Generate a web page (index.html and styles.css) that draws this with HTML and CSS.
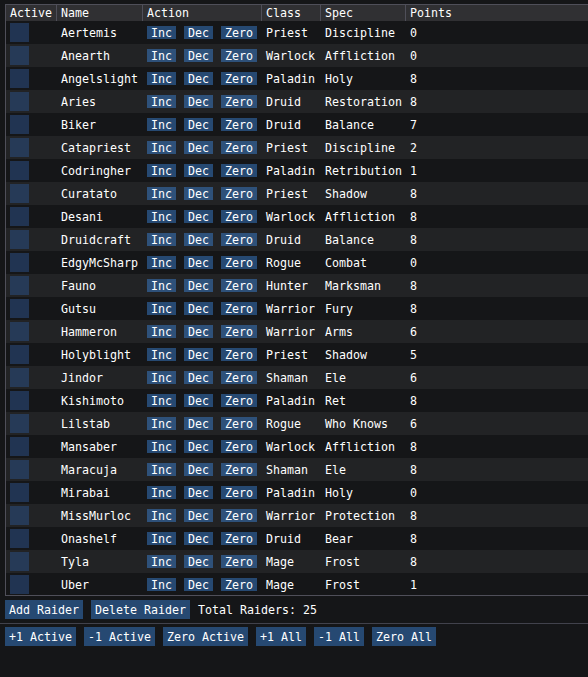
FILE: index.html
```html
<!DOCTYPE html>
<html>
<head>
<meta charset="utf-8">
<link rel="stylesheet" href="styles.css">
</head>
<body>
<div class="window">
  <div class="table">
    <div class="row head">
      <div class="cell">Active</div>
      <div class="cell">Name</div>
      <div class="cell">Action</div>
      <div class="cell">Class</div>
      <div class="cell">Spec</div>
      <div class="cell">Points</div>
    </div>
    <div class="row"><div class="cell"><div class="chk"></div></div><div class="cell"><div class="t">Aertemis</div></div><div class="cell"><div class="acts"><div class="sb">Inc</div><div class="sb">Dec</div><div class="sb">Zero</div></div></div><div class="cell"><div class="t">Priest</div></div><div class="cell"><div class="t">Discipline</div></div><div class="cell"><div class="t">0</div></div></div>
    <div class="row alt"><div class="cell"><div class="chk"></div></div><div class="cell"><div class="t">Anearth</div></div><div class="cell"><div class="acts"><div class="sb">Inc</div><div class="sb">Dec</div><div class="sb">Zero</div></div></div><div class="cell"><div class="t">Warlock</div></div><div class="cell"><div class="t">Affliction</div></div><div class="cell"><div class="t">0</div></div></div>
    <div class="row"><div class="cell"><div class="chk"></div></div><div class="cell"><div class="t">Angelslight</div></div><div class="cell"><div class="acts"><div class="sb">Inc</div><div class="sb">Dec</div><div class="sb">Zero</div></div></div><div class="cell"><div class="t">Paladin</div></div><div class="cell"><div class="t">Holy</div></div><div class="cell"><div class="t">8</div></div></div>
    <div class="row alt"><div class="cell"><div class="chk"></div></div><div class="cell"><div class="t">Aries</div></div><div class="cell"><div class="acts"><div class="sb">Inc</div><div class="sb">Dec</div><div class="sb">Zero</div></div></div><div class="cell"><div class="t">Druid</div></div><div class="cell"><div class="t">Restoration</div></div><div class="cell"><div class="t">8</div></div></div>
    <div class="row"><div class="cell"><div class="chk"></div></div><div class="cell"><div class="t">Biker</div></div><div class="cell"><div class="acts"><div class="sb">Inc</div><div class="sb">Dec</div><div class="sb">Zero</div></div></div><div class="cell"><div class="t">Druid</div></div><div class="cell"><div class="t">Balance</div></div><div class="cell"><div class="t">7</div></div></div>
    <div class="row alt"><div class="cell"><div class="chk"></div></div><div class="cell"><div class="t">Catapriest</div></div><div class="cell"><div class="acts"><div class="sb">Inc</div><div class="sb">Dec</div><div class="sb">Zero</div></div></div><div class="cell"><div class="t">Priest</div></div><div class="cell"><div class="t">Discipline</div></div><div class="cell"><div class="t">2</div></div></div>
    <div class="row"><div class="cell"><div class="chk"></div></div><div class="cell"><div class="t">Codringher</div></div><div class="cell"><div class="acts"><div class="sb">Inc</div><div class="sb">Dec</div><div class="sb">Zero</div></div></div><div class="cell"><div class="t">Paladin</div></div><div class="cell"><div class="t">Retribution</div></div><div class="cell"><div class="t">1</div></div></div>
    <div class="row alt"><div class="cell"><div class="chk"></div></div><div class="cell"><div class="t">Curatato</div></div><div class="cell"><div class="acts"><div class="sb">Inc</div><div class="sb">Dec</div><div class="sb">Zero</div></div></div><div class="cell"><div class="t">Priest</div></div><div class="cell"><div class="t">Shadow</div></div><div class="cell"><div class="t">8</div></div></div>
    <div class="row"><div class="cell"><div class="chk"></div></div><div class="cell"><div class="t">Desani</div></div><div class="cell"><div class="acts"><div class="sb">Inc</div><div class="sb">Dec</div><div class="sb">Zero</div></div></div><div class="cell"><div class="t">Warlock</div></div><div class="cell"><div class="t">Affliction</div></div><div class="cell"><div class="t">8</div></div></div>
    <div class="row alt"><div class="cell"><div class="chk"></div></div><div class="cell"><div class="t">Druidcraft</div></div><div class="cell"><div class="acts"><div class="sb">Inc</div><div class="sb">Dec</div><div class="sb">Zero</div></div></div><div class="cell"><div class="t">Druid</div></div><div class="cell"><div class="t">Balance</div></div><div class="cell"><div class="t">8</div></div></div>
    <div class="row"><div class="cell"><div class="chk"></div></div><div class="cell"><div class="t">EdgyMcSharp</div></div><div class="cell"><div class="acts"><div class="sb">Inc</div><div class="sb">Dec</div><div class="sb">Zero</div></div></div><div class="cell"><div class="t">Rogue</div></div><div class="cell"><div class="t">Combat</div></div><div class="cell"><div class="t">0</div></div></div>
    <div class="row alt"><div class="cell"><div class="chk"></div></div><div class="cell"><div class="t">Fauno</div></div><div class="cell"><div class="acts"><div class="sb">Inc</div><div class="sb">Dec</div><div class="sb">Zero</div></div></div><div class="cell"><div class="t">Hunter</div></div><div class="cell"><div class="t">Marksman</div></div><div class="cell"><div class="t">8</div></div></div>
    <div class="row"><div class="cell"><div class="chk"></div></div><div class="cell"><div class="t">Gutsu</div></div><div class="cell"><div class="acts"><div class="sb">Inc</div><div class="sb">Dec</div><div class="sb">Zero</div></div></div><div class="cell"><div class="t">Warrior</div></div><div class="cell"><div class="t">Fury</div></div><div class="cell"><div class="t">8</div></div></div>
    <div class="row alt"><div class="cell"><div class="chk"></div></div><div class="cell"><div class="t">Hammeron</div></div><div class="cell"><div class="acts"><div class="sb">Inc</div><div class="sb">Dec</div><div class="sb">Zero</div></div></div><div class="cell"><div class="t">Warrior</div></div><div class="cell"><div class="t">Arms</div></div><div class="cell"><div class="t">6</div></div></div>
    <div class="row"><div class="cell"><div class="chk"></div></div><div class="cell"><div class="t">Holyblight</div></div><div class="cell"><div class="acts"><div class="sb">Inc</div><div class="sb">Dec</div><div class="sb">Zero</div></div></div><div class="cell"><div class="t">Priest</div></div><div class="cell"><div class="t">Shadow</div></div><div class="cell"><div class="t">5</div></div></div>
    <div class="row alt"><div class="cell"><div class="chk"></div></div><div class="cell"><div class="t">Jindor</div></div><div class="cell"><div class="acts"><div class="sb">Inc</div><div class="sb">Dec</div><div class="sb">Zero</div></div></div><div class="cell"><div class="t">Shaman</div></div><div class="cell"><div class="t">Ele</div></div><div class="cell"><div class="t">6</div></div></div>
    <div class="row"><div class="cell"><div class="chk"></div></div><div class="cell"><div class="t">Kishimoto</div></div><div class="cell"><div class="acts"><div class="sb">Inc</div><div class="sb">Dec</div><div class="sb">Zero</div></div></div><div class="cell"><div class="t">Paladin</div></div><div class="cell"><div class="t">Ret</div></div><div class="cell"><div class="t">8</div></div></div>
    <div class="row alt"><div class="cell"><div class="chk"></div></div><div class="cell"><div class="t">Lilstab</div></div><div class="cell"><div class="acts"><div class="sb">Inc</div><div class="sb">Dec</div><div class="sb">Zero</div></div></div><div class="cell"><div class="t">Rogue</div></div><div class="cell"><div class="t">Who Knows</div></div><div class="cell"><div class="t">6</div></div></div>
    <div class="row"><div class="cell"><div class="chk"></div></div><div class="cell"><div class="t">Mansaber</div></div><div class="cell"><div class="acts"><div class="sb">Inc</div><div class="sb">Dec</div><div class="sb">Zero</div></div></div><div class="cell"><div class="t">Warlock</div></div><div class="cell"><div class="t">Affliction</div></div><div class="cell"><div class="t">8</div></div></div>
    <div class="row alt"><div class="cell"><div class="chk"></div></div><div class="cell"><div class="t">Maracuja</div></div><div class="cell"><div class="acts"><div class="sb">Inc</div><div class="sb">Dec</div><div class="sb">Zero</div></div></div><div class="cell"><div class="t">Shaman</div></div><div class="cell"><div class="t">Ele</div></div><div class="cell"><div class="t">8</div></div></div>
    <div class="row"><div class="cell"><div class="chk"></div></div><div class="cell"><div class="t">Mirabai</div></div><div class="cell"><div class="acts"><div class="sb">Inc</div><div class="sb">Dec</div><div class="sb">Zero</div></div></div><div class="cell"><div class="t">Paladin</div></div><div class="cell"><div class="t">Holy</div></div><div class="cell"><div class="t">0</div></div></div>
    <div class="row alt"><div class="cell"><div class="chk"></div></div><div class="cell"><div class="t">MissMurloc</div></div><div class="cell"><div class="acts"><div class="sb">Inc</div><div class="sb">Dec</div><div class="sb">Zero</div></div></div><div class="cell"><div class="t">Warrior</div></div><div class="cell"><div class="t">Protection</div></div><div class="cell"><div class="t">8</div></div></div>
    <div class="row"><div class="cell"><div class="chk"></div></div><div class="cell"><div class="t">Onashelf</div></div><div class="cell"><div class="acts"><div class="sb">Inc</div><div class="sb">Dec</div><div class="sb">Zero</div></div></div><div class="cell"><div class="t">Druid</div></div><div class="cell"><div class="t">Bear</div></div><div class="cell"><div class="t">8</div></div></div>
    <div class="row alt"><div class="cell"><div class="chk"></div></div><div class="cell"><div class="t">Tyla</div></div><div class="cell"><div class="acts"><div class="sb">Inc</div><div class="sb">Dec</div><div class="sb">Zero</div></div></div><div class="cell"><div class="t">Mage</div></div><div class="cell"><div class="t">Frost</div></div><div class="cell"><div class="t">8</div></div></div>
    <div class="row last"><div class="cell"><div class="chk"></div></div><div class="cell"><div class="t">Uber</div></div><div class="cell"><div class="acts"><div class="sb">Inc</div><div class="sb">Dec</div><div class="sb">Zero</div></div></div><div class="cell"><div class="t">Mage</div></div><div class="cell"><div class="t">Frost</div></div><div class="cell"><div class="t">1</div></div></div>
  </div>
  <div class="bar">
    <div class="btn">Add Raider</div>
    <div class="btn">Delete Raider</div>
    <div class="label">Total Raiders: 25</div>
  </div>
  <div class="sep"></div>
  <div class="bar bar2">
    <div class="btn">+1 Active</div>
    <div class="btn">-1 Active</div>
    <div class="btn">Zero Active</div>
    <div class="btn">+1 All</div>
    <div class="btn">-1 All</div>
    <div class="btn">Zero All</div>
  </div>
</div>
</body>
</html>
```

FILE: styles.css
```css
html, body {
  margin: 0;
  padding: 0;
  background: #151618;
  overflow: hidden;
  height: 677px;
}
body {
  font-family: "DejaVu Sans Mono", "Liberation Mono", monospace;
  font-size: 11.63px;
  color: #ffffff;
}
.window {
  padding: 4px 0 0 5px;
  width: 583px;
}
.table {
  border-left: 1px solid #4f4f59;
  border-top: 1px solid #4f4f59;
  border-bottom: 1px solid #4f4f59;
}
.row {
  display: grid;
  grid-template-columns: 50px 86px 119px 59px 85px 1fr;
  height: 23px;
}
.row.alt {
  background: rgba(255, 255, 255, 0.06);
}
.row.last {
  height: 22px;
}
.cell {
  padding: 2px 4px 0;
  border-left: 1px solid transparent;
  white-space: nowrap;
  min-width: 0;
}
.cell:first-child {
  border-left: none;
}
.head {
  height: 16px;
  background: #303033;
}
.head .cell {
  padding-top: 1px;
  line-height: 15px;
  border-left-color: #4f4f59;
}
.head .cell:first-child {
  border-left: none;
}
.chk {
  width: 19px;
  height: 19px;
  background: rgba(41, 74, 122, 0.6);
}
.t {
  margin-top: 3px;
  height: 13px;
  line-height: 15px;
}
.acts {
  display: flex;
  gap: 8px;
  margin-top: 3px;
}
.sb {
  height: 13px;
  line-height: 15px;
  padding: 0 4px;
  background: rgba(66, 150, 250, 0.40);
}
.bar {
  display: flex;
  gap: 8px;
  margin-top: 4px;
  align-items: flex-start;
}
.btn, .label {
  box-sizing: border-box;
  height: 19px;
  padding: 3px 4px 0;
  line-height: 15px;
  white-space: nowrap;
}
.btn {
  background: rgba(66, 150, 250, 0.40);
}
.label {
  padding-left: 0;
}
.sep {
  height: 1px;
  width: 588px;
  margin: 4px 0 3px -5px;
  background: rgba(110, 110, 128, 0.5);
}
.bar2 {
  margin-top: 0;
}
```
